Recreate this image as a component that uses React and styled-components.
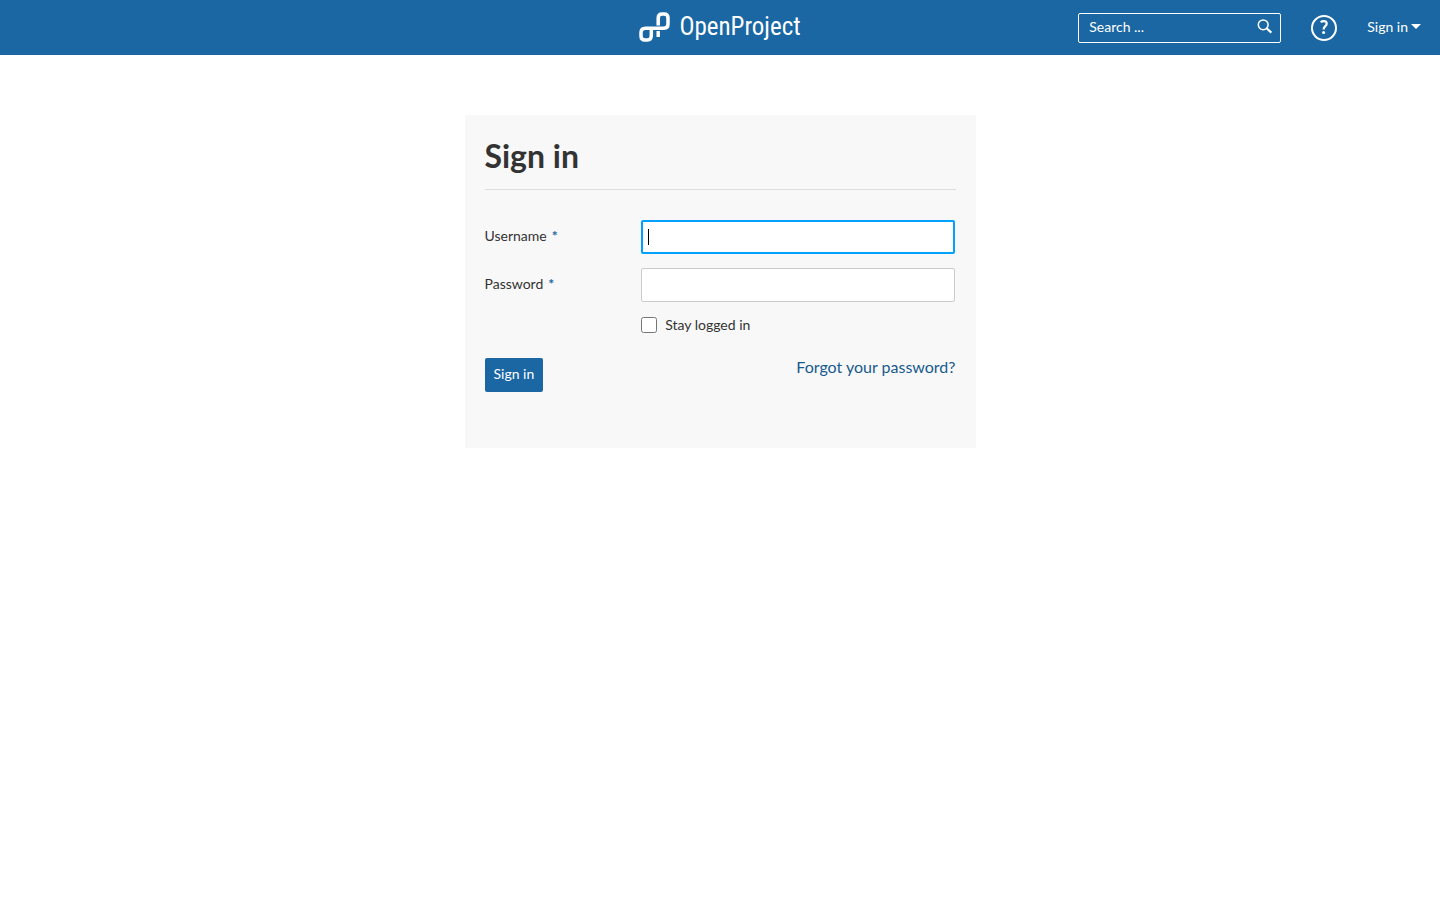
import React from "react";
import styled, { createGlobalStyle } from "styled-components";

const GlobalStyle = createGlobalStyle`
  *, *::before, *::after { box-sizing: border-box; }
  body {
    margin: 0;
    background: #fff;
    color: #333;
    font-family: Lato, "Liberation Sans", sans-serif;
    font-size: 14px;
    line-height: 20px;
  }
  input, button { font: inherit; color: inherit; }
`;

const Header = styled.header`
  display: grid;
  grid-template-columns: 1fr auto 1fr;
  align-items: center;
  height: 55px;
  padding: 0 19px;
  background: #1a67a3;
  color: #fff;
`;

const Logo = styled.a`
  grid-column: 2;
  display: flex;
  align-items: center;
  gap: 9px;
  padding-bottom: 2px;
  color: #fff;
  text-decoration: none;
`;

const Wordmark = styled.span`
  font-family: "Roboto Condensed", Roboto, sans-serif;
  font-size: 25px;
  line-height: 30px;
`;

const HeaderTools = styled.div`
  display: flex;
  justify-content: flex-end;
  align-items: center;
  gap: 30px;
`;

const SearchBox = styled.form`
  display: flex;
  align-items: center;
  width: 203px;
  height: 30px;
  padding: 0 8px 2px 10px;
  border: 1px solid #fff;
  border-radius: 2px;
`;

const SearchInput = styled.input`
  flex: 1;
  min-width: 0;
  padding: 0;
  border: 0;
  outline: 0;
  background: transparent;
  &::placeholder { color: #fff; opacity: 1; }
`;

const IconButton = styled.button`
  display: flex;
  padding: 0;
  border: 0;
  background: transparent;
  cursor: pointer;
`;

const SignInMenu = styled(IconButton)`
  align-items: center;
  gap: 3px;
  padding-bottom: 2px;
`;

const Main = styled.main`
  display: flex;
  justify-content: center;
  padding: 60px 20px;
`;

const Card = styled.form`
  width: 100%;
  max-width: 511px;
  padding: 20px 20px 56px;
  background: #f8f8f8;
`;

const Title = styled.h1`
  margin: 0 0 30px;
  padding: 0 0 12px;
  border-bottom: 1px solid #ddd;
  font-size: 32px;
  line-height: 42px;
  font-weight: 700;
`;

const Fields = styled.div`
  display: grid;
  grid-template-columns: 1fr 2fr;
  row-gap: 14px;
  align-items: center;
  padding-right: 1px;
`;

const Label = styled.label`
  display: flex;
  gap: 5px;
  padding-bottom: 2px;
`;

const Required = styled.span`
  color: #1a67a3;
  font-weight: 700;
`;

const TextInput = styled.input`
  width: 100%;
  height: 34px;
  padding: 0 6px;
  border: 1px solid #cbcbcb;
  border-radius: 2px;
  background: #fff;
  &:focus {
    border: 2px solid #00a1ff;
    outline: 0;
    padding: 0 5px;
  }
  &:focus:placeholder-shown {
    caret-color: transparent;
    background: linear-gradient(#000, #000) 5px 50% / 1px 16px no-repeat #fff;
  }
`;

const CheckLabel = styled.label`
  grid-column: 2;
  display: flex;
  align-items: center;
  gap: 8px;
  line-height: 18px;
`;

const Checkbox = styled.input`
  width: 16px;
  height: 16px;
  margin: 0;
`;

const Actions = styled.div`
  display: flex;
  justify-content: space-between;
  align-items: flex-start;
  margin-top: 24px;
`;

const SubmitButton = styled.button`
  height: 34px;
  padding: 0 9px 2px;
  border: 0;
  border-radius: 2px;
  background: #1a67a3;
  color: #fff;
  cursor: pointer;
`;

const ForgotLink = styled.a`
  color: #175a8e;
  font-size: 16px;
  line-height: 18px;
  text-decoration: none;
`;

function LogoMark() {
  return (
    <svg width="31" height="30" viewBox="0 0 31 30" fill="none" aria-hidden="true">
      <path
        d="M12.300 17.500V23.500Q12.300 28 8.300 28H6Q2 28 2 24V20.500Q2 16.200 6.500 16.200H25Q29 16.200 29 12V6Q29 2 25 2H23.200Q19.200 2 19.200 6V13.500"
        stroke="#fff"
        strokeWidth="3.500"
      />
      <path d="M19.200 19V25" stroke="#fff" strokeWidth="3.400" />
    </svg>
  );
}

function SearchIcon() {
  return (
    <svg width="15" height="15" viewBox="0 0 15 15" fill="none" stroke="#fff" aria-hidden="true">
      <circle cx="6.200" cy="5.800" r="4.900" strokeWidth="1.500" />
      <path d="M9.900 9.500L14.300 13.700" strokeWidth="2.200" />
    </svg>
  );
}

function HelpIcon() {
  return (
    <svg width="26" height="26" viewBox="0 0 26 26" fill="none" stroke="#fff" aria-hidden="true">
      <circle cx="13" cy="13" r="12" strokeWidth="2" />
      <path d="M9.700 7.300C11.500 5.600 15.700 5.600 15.700 8.700C15.700 11.300 12.600 11.100 12.600 14.400" strokeWidth="2.200" />
      <circle cx="12.600" cy="17.600" r="1.500" fill="#fff" stroke="none" />
    </svg>
  );
}

function Caret() {
  return (
    <svg width="10" height="5" viewBox="0 0 10 5" aria-hidden="true">
      <path d="M0 0H10L5 5Z" fill="#fff" />
    </svg>
  );
}

export default function App() {
  return (
    <>
      <GlobalStyle />
      <Header>
        <Logo href="#">
          <LogoMark />
          <Wordmark>OpenProject</Wordmark>
        </Logo>
        <HeaderTools>
          <SearchBox role="search">
            <SearchInput type="text" placeholder="Search ..." aria-label="Search" />
            <IconButton type="button" aria-label="Search">
              <SearchIcon />
            </IconButton>
          </SearchBox>
          <IconButton type="button" aria-label="Help">
            <HelpIcon />
          </IconButton>
          <SignInMenu type="button">
            Sign in
            <Caret />
          </SignInMenu>
        </HeaderTools>
      </Header>
      <Main>
        <Card>
          <Title>Sign in</Title>
          <Fields>
            <Label htmlFor="username">
              Username <Required>*</Required>
            </Label>
            <TextInput id="username" type="text" placeholder=" " autoFocus />
            <Label htmlFor="password">
              Password <Required>*</Required>
            </Label>
            <TextInput id="password" type="password" placeholder=" " />
            <CheckLabel>
              <Checkbox type="checkbox" />
              Stay logged in
            </CheckLabel>
          </Fields>
          <Actions>
            <SubmitButton type="submit">Sign in</SubmitButton>
            <ForgotLink href="#">Forgot your password?</ForgotLink>
          </Actions>
        </Card>
      </Main>
    </>
  );
}
